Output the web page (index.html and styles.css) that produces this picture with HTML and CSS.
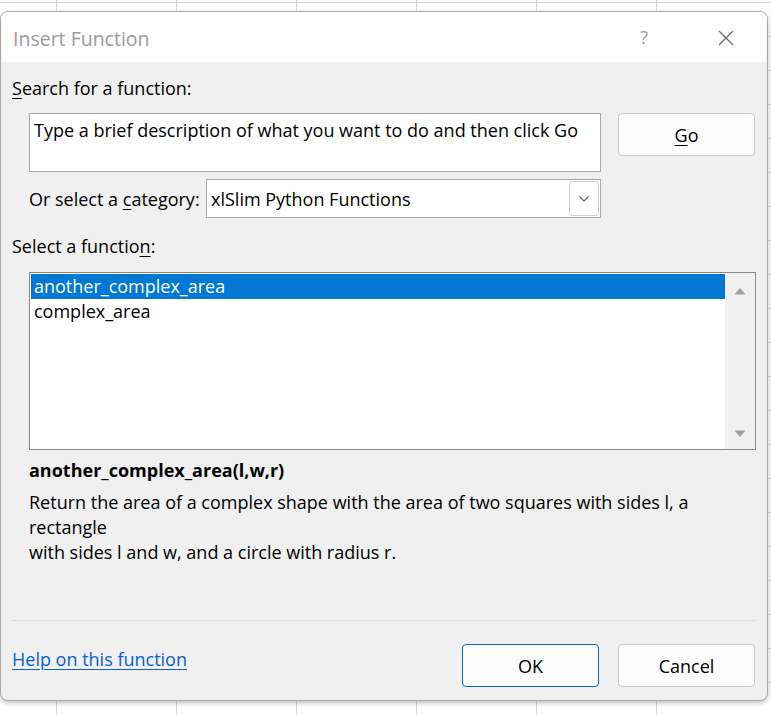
FILE: index.html
```html
<!DOCTYPE html>
<html>
<head>
<meta charset="utf-8">
<link rel="stylesheet" href="styles.css">
</head>
<body>
<div class="dialog">
  <div class="titlebar">
    <span class="title">Insert Function</span>
    <span class="help">?</span>
    <svg class="close" width="16" height="16" viewBox="0 0 16 16"><path d="M1 1 L15 15 M15 1 L1 15" stroke="#6b6b6b" stroke-width="1.2" fill="none"/></svg>
  </div>
  <div class="content">
    <div class="label lbl-search"><u>S</u>earch for a function:</div>
    <div class="search-row">
      <div class="searchbox">Type a brief description of what you want to do and then click Go</div>
      <div class="btn btn-go"><u>G</u>o</div>
    </div>
    <div class="cat-row">
      <span class="cat-label">Or select a <u>c</u>ategory:</span>
      <div class="combo">
        <span class="combo-text">xlSlim Python Functions</span>
        <div class="dd"><svg width="12" height="8" viewBox="0 0 12 8"><path d="M1.5 1.5 L6 6 L10.5 1.5" stroke="#5f5f5f" stroke-width="1.1" fill="none"/></svg></div>
      </div>
    </div>
    <div class="label lbl-func">Select a functio<u>n</u>:</div>
    <div class="list">
      <div class="items">
        <div class="item selected">another_complex_area</div>
        <div class="item">complex_area</div>
      </div>
      <div class="scrollbar">
        <svg width="12" height="8" viewBox="0 0 12 8"><path d="M0.5 7.5 L6 1 L11.5 7.5 Z" fill="#a0a0a0"/></svg>
        <svg width="12" height="8" viewBox="0 0 12 8"><path d="M0.5 0.5 L6 7 L11.5 0.5 Z" fill="#a0a0a0"/></svg>
      </div>
    </div>
    <div class="sig">another_complex_area(l,w,r)</div>
    <div class="desc">Return the area of a complex shape with the area of two squares with sides l, a<br>rectangle<br>with sides l and w, and a circle with radius r.</div>
    <div class="sep"></div>
    <div class="footer">
      <a class="link" href="#">Help on this function</a>
      <div class="btn btn-ok">OK</div>
      <div class="btn btn-cancel">Cancel</div>
    </div>
  </div>
</div>
</body>
</html>
```

FILE: styles.css
```css
html, body {
  margin: 0;
  padding: 0;
}
body {
  width: 771px;
  height: 715px;
  overflow: hidden;
  padding-top: 11px;
  box-sizing: border-box;
  background-color: #ffffff;
  background-image:
    linear-gradient(to right, transparent 56px, #d6d6d6 56px, #d6d6d6 57px, transparent 57px),
    linear-gradient(to bottom, transparent 2px, #d6d6d6 2px, #d6d6d6 3px, transparent 3px);
  background-size: 120px 100%, 100% 34px;
  font-family: "Open Sans", "Noto Sans", sans-serif;
  font-size: 18px;
  color: #000;
}
.dialog {
  width: 768px;
  height: 690px;
  box-sizing: border-box;
  border: 1px solid #a8a8a8;
  border-radius: 8px;
  background: #f0f0f0;
  box-shadow: 0 2px 5px rgba(0,0,0,0.25);
  overflow: hidden;
  display: flex;
  flex-direction: column;
}
.titlebar {
  height: 50px;
  background: #ffffff;
  display: flex;
  align-items: center;
  flex-shrink: 0;
}
.title {
  margin-left: 12px;
  font-size: 19.5px;
  color: #9b9b9b;
  margin-top: 2px;
}
.help {
  margin-left: auto;
  font-size: 18px;
  color: #9a9a9a;
}
.close {
  margin-left: 70px;
  margin-right: 33px;
  margin-top: 2px;
}
.content {
  padding-left: 11px;
  display: flex;
  flex-direction: column;
  line-height: 24px;
}
u {
  text-decoration-thickness: 1px;
  text-underline-offset: 3px;
}
.label {
  height: 24px;
  white-space: nowrap;
}
.lbl-search {
  margin-top: 14px;
}
.search-row {
  margin-top: 13px;
  display: flex;
  align-items: flex-start;
}
.searchbox {
  margin-left: 17px;
  width: 572px;
  height: 59px;
  box-sizing: border-box;
  border: 1px solid #a9a9a9;
  background: #fff;
  padding: 4px 0 0 4px;
  white-space: nowrap;
  overflow: hidden;
}
.btn {
  box-sizing: border-box;
  width: 137px;
  height: 43px;
  border: 1px solid #cccccc;
  border-radius: 4px;
  background: #fdfdfd;
  display: flex;
  align-items: center;
  justify-content: center;
}
.btn-go {
  margin-left: 17px;
}
.cat-row {
  margin-top: 7px;
  display: flex;
  align-items: center;
  height: 39px;
}
.cat-label {
  margin-left: 17px;
  width: 177px;
  white-space: nowrap;
}
.combo {
  width: 395px;
  height: 39px;
  box-sizing: border-box;
  border: 1px solid #a9a9a9;
  background: #fff;
  display: flex;
  align-items: center;
}
.combo-text {
  padding-left: 4px;
  flex: 1;
  white-space: nowrap;
}
.dd {
  width: 30px;
  height: 35px;
  margin-right: 1px;
  box-sizing: border-box;
  border: 1px solid #d0d0d0;
  border-radius: 3px;
  display: flex;
  align-items: center;
  justify-content: center;
}
.lbl-func {
  margin-top: 16px;
}
.list {
  margin-top: 14px;
  margin-left: 17px;
  width: 727px;
  height: 178px;
  box-sizing: border-box;
  border: 1px solid #85888d;
  background: #fff;
  display: flex;
}
.items {
  flex: 1;
  padding: 1px 0 0 1px;
}
.item {
  height: 25px;
  line-height: 25px;
  padding-left: 3px;
  white-space: nowrap;
}
.item.selected {
  background: #0078d4;
  color: #fff;
}
.scrollbar {
  width: 30px;
  background: #f0f0f0;
  display: flex;
  flex-direction: column;
  justify-content: space-between;
  align-items: center;
  padding: 14px 0 11px;
  box-sizing: border-box;
}
.scrollbar svg {
  display: block;
}
.sig {
  margin-top: 8px;
  margin-left: 17px;
  font-weight: bold;
  white-space: nowrap;
}
.desc {
  margin-top: 8px;
  margin-left: 17px;
  line-height: 25px;
  white-space: nowrap;
}
.sep {
  margin-top: 55px;
  width: 743px;
  height: 1px;
  background: #dcdcdc;
}
.footer {
  margin-top: 23px;
  display: flex;
  align-items: flex-start;
  height: 43px;
}
.link {
  color: #0b61c9;
  text-decoration: underline;
  text-decoration-thickness: 1px;
  text-underline-offset: 3px;
  margin-top: 3px;
}
.btn-ok {
  margin-left: auto;
  border-color: #0067c0;
}
.btn-cancel {
  margin-left: 19px;
  margin-right: 12px;
}
```
